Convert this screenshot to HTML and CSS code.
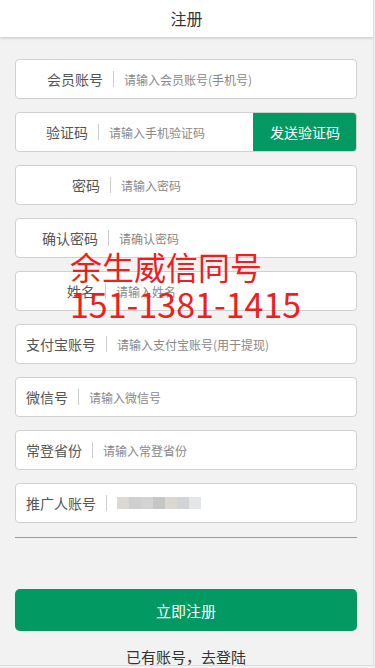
FILE: index.html
```html
<!DOCTYPE html>
<html lang="zh-CN">
<head>
    <meta charset="UTF-8">
    <title>注册</title>
    <link rel="stylesheet" href="styles.css">
</head>
<body>
    <div class="page">
        <div class="header">注册</div>
        <form class="reg-form">
            <!-- Form rows -->
            <div class="field">
                <span class="label label-account">会员账号</span>
                <span class="sep"></span>
                <input type="text" placeholder="请输入会员账号(手机号)">
            </div>
            <div class="field">
                <span class="label label-code">验证码</span>
                <span class="sep"></span>
                <input type="text" placeholder="请输入手机验证码">
                <button type="button" class="send-btn">发送验证码</button>
            </div>
            <div class="field">
                <span class="label label-pwd">密码</span>
                <span class="sep"></span>
                <input type="password" placeholder="请输入密码">
            </div>
            <div class="field">
                <span class="label label-repwd">确认密码</span>
                <span class="sep"></span>
                <input type="password" placeholder="请确认密码">
            </div>
            <div class="field">
                <span class="label label-name">姓名</span>
                <span class="sep"></span>
                <input type="text" placeholder="请输入姓名">
            </div>
            <div class="field">
                <span class="label">支付宝账号</span>
                <span class="sep"></span>
                <input type="text" placeholder="请输入支付宝账号(用于提现)">
            </div>
            <div class="field">
                <span class="label">微信号</span>
                <span class="sep"></span>
                <input type="text" placeholder="请输入微信号">
            </div>
            <div class="field">
                <span class="label">常登省份</span>
                <span class="sep"></span>
                <input type="text" placeholder="请输入常登省份">
            </div>
            <div class="field">
                <span class="label">推广人账号</span>
                <span class="sep"></span>
                <div class="blurred">
                    <span class="px px1"></span>
                    <span class="px px2"></span>
                    <span class="px px3"></span>
                    <span class="px px4"></span>
                    <span class="px px5"></span>
                    <span class="px px6"></span>
                    <span class="px px7"></span>
                </div>
            </div>
            <div class="divider"></div>
            <button type="button" class="submit-btn">立即注册</button>
            <div class="login-link">已有账号，去登陆</div>
        </form>
        <div class="watermark">
            <div class="wm-line1">余生威信同号</div>
            <div class="wm-line2">151-1381-1415</div>
        </div>
    </div>
</body>
</html>
```

FILE: styles.css
```css
body {
    margin: 0;
    background-color: #f2f2f2;
    font-family: "Noto Sans CJK SC", "Noto Sans", sans-serif;
    color: #333;
}
.page {
    position: relative;
    width: 374px;
    height: 666px;
    box-sizing: border-box;
    border-right: 1px solid #dcdcdc;
    border-bottom: 1px solid #dcdcdc;
    overflow: hidden;
}
.header {
    height: 37px;
    line-height: 37px;
    text-align: center;
    font-size: 16px;
    color: #333;
    background-color: #fff;
    box-shadow: 0 1px 3px rgba(0, 0, 0, 0.2);
}
.reg-form {
    display: flex;
    flex-direction: column;
    padding: 22px 16px 0 15px;
}
.field {
    display: flex;
    align-items: center;
    height: 40px;
    box-sizing: border-box;
    margin-bottom: 13px;
    background-color: #fff;
    border: 1px solid #d0d0d0;
    border-radius: 4px;
    overflow: hidden;
}
.label {
    padding-left: 10px;
    font-size: 14px;
    color: #555;
    white-space: nowrap;
}
.label-account { padding-left: 31px; }
.label-code { padding-left: 30px; }
.label-pwd { padding-left: 56px; }
.label-repwd { padding-left: 26px; }
.label-name { padding-left: 51px; }
.sep {
    width: 1px;
    height: 16px;
    margin: 0 10px;
    background-color: #ccc;
}
.field input {
    flex: 1;
    min-width: 0;
    border: none;
    outline: none;
    padding: 0;
    background: transparent;
    font-family: inherit;
    font-size: 12px;
    color: #333;
}
.field input::placeholder {
    color: #888;
}
.send-btn {
    width: 104px;
    height: 40px;
    margin-right: -1px;
    border: none;
    background-color: #029a62;
    color: #fff;
    font-family: inherit;
    font-size: 14px;
    cursor: pointer;
}
.blurred {
    display: flex;
}
.px {
    width: 12px;
    height: 12px;
}
.px1 { background: #dcd8d4; }
.px2 { background: #cfcfd1; }
.px3 { background: #d3d3d3; }
.px4 { background: #c4c7c6; }
.px5 { background: #dbd8d2; }
.px6 { background: #d1d3d6; }
.px7 { background: #e5e6e8; }
.divider {
    height: 1px;
    margin-top: 1px;
    background-color: #9a9a9a;
}
.submit-btn {
    height: 42px;
    margin-top: 51px;
    border: none;
    border-radius: 5px;
    background-color: #029a62;
    color: #fff;
    font-family: inherit;
    font-size: 15px;
    cursor: pointer;
}
.login-link {
    margin-top: 15px;
    text-align: center;
    font-size: 15px;
    color: #333;
}
.watermark {
    position: absolute;
    left: 70px;
    top: 247px;
    color: #f01e1e;
    pointer-events: none;
}
.wm-line1 {
    font-size: 32px;
    line-height: 38px;
}
.wm-line2 {
    font-size: 34px;
    line-height: 38px;
}
```
